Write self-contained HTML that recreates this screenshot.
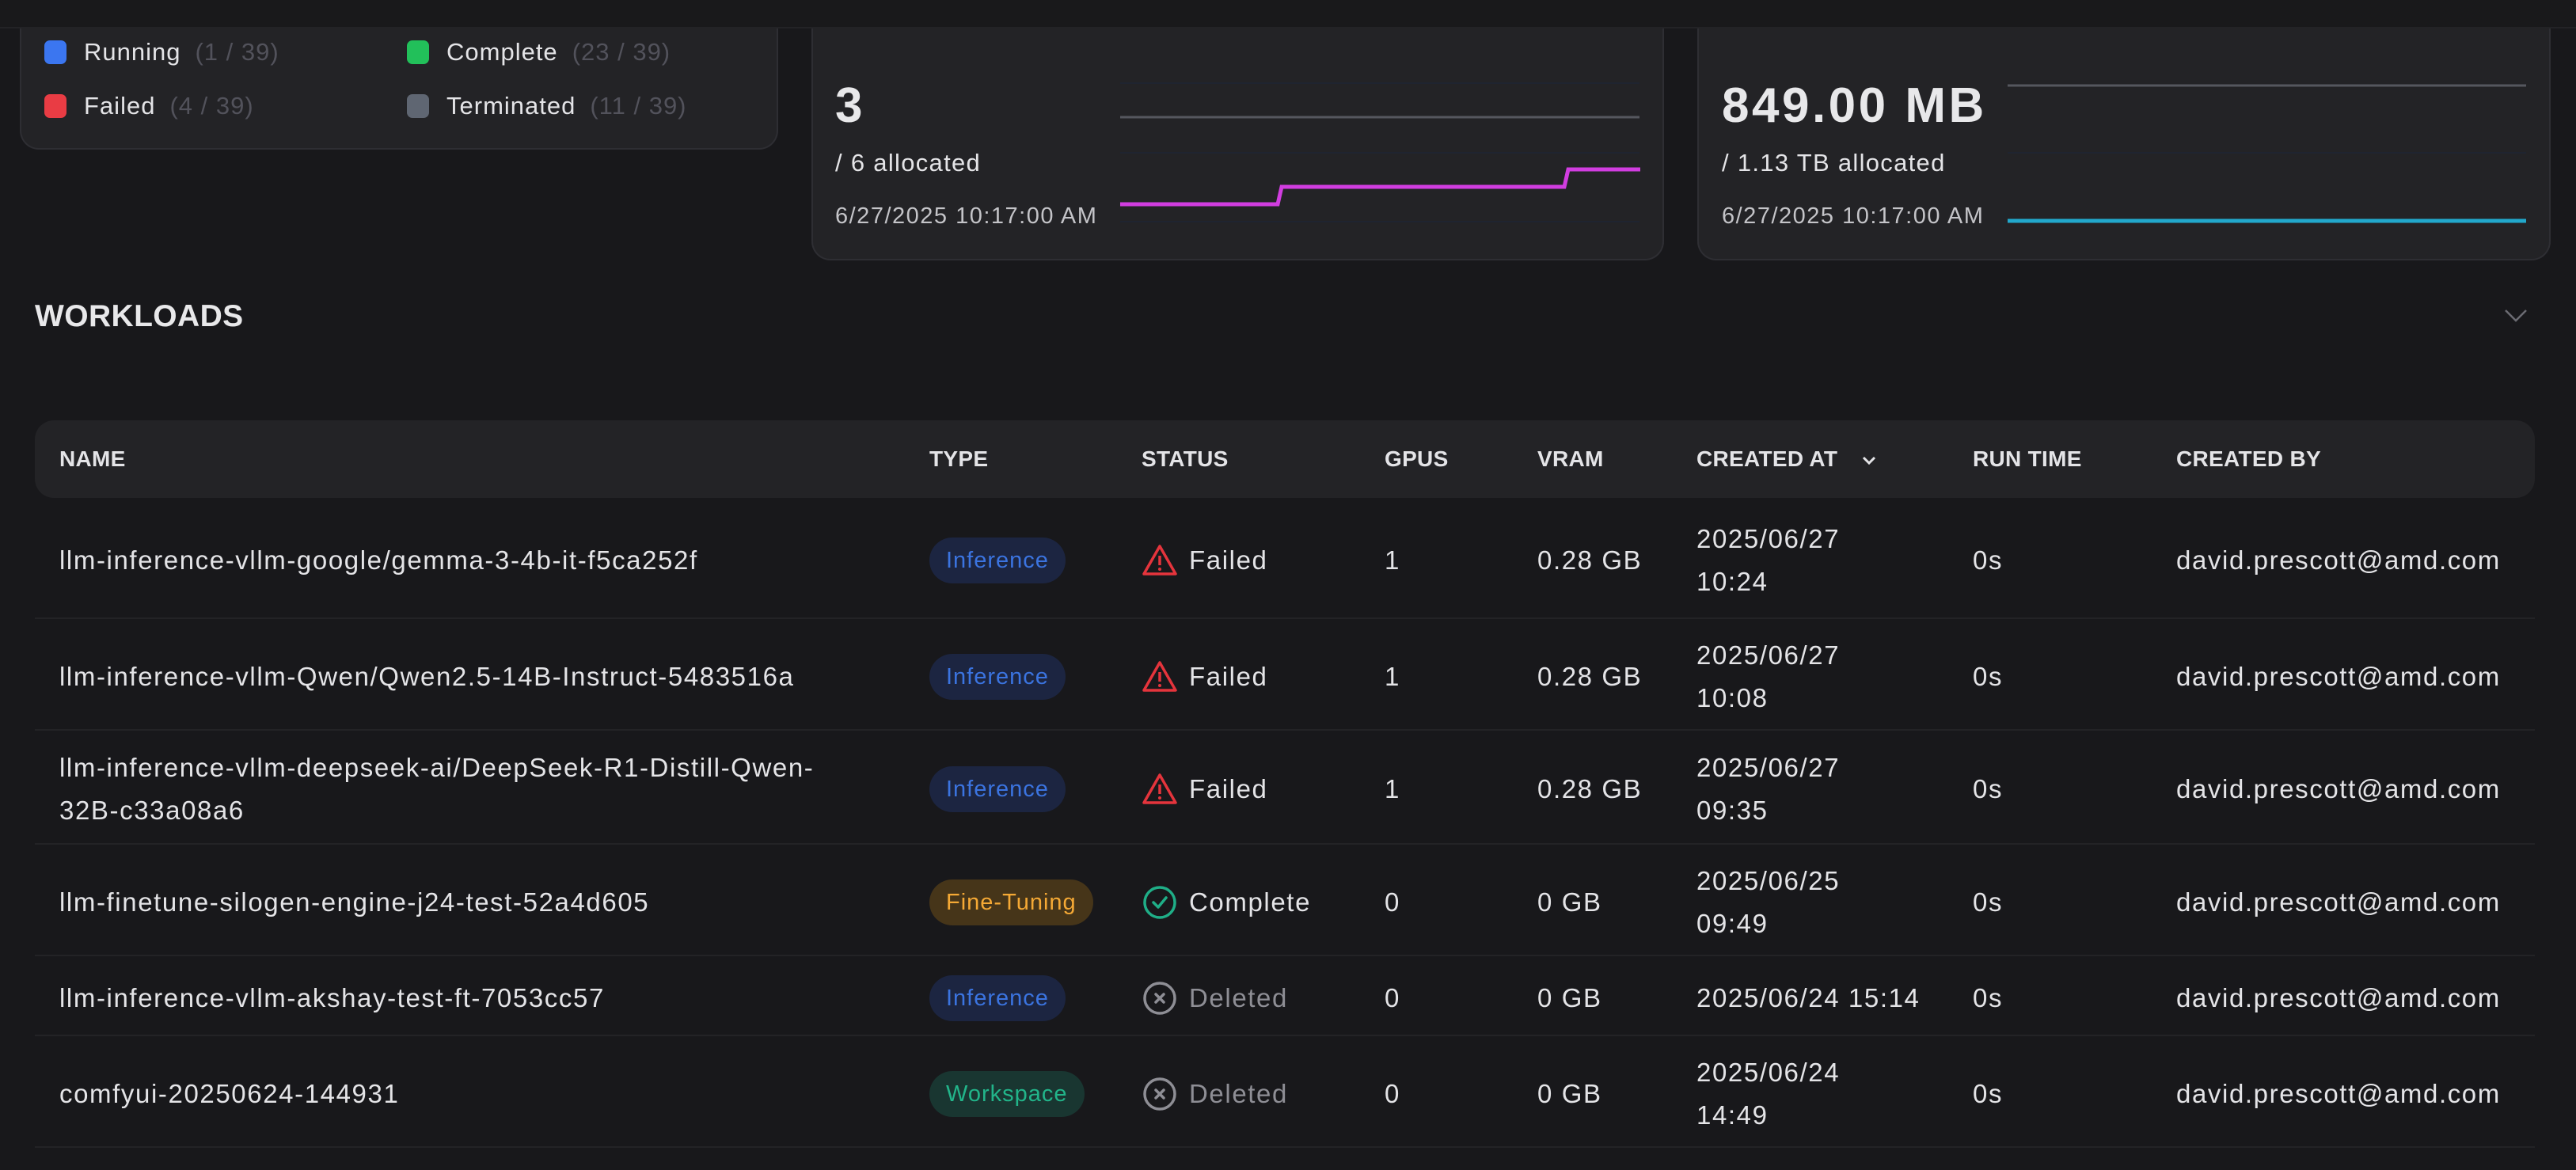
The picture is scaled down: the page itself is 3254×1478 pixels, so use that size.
<!DOCTYPE html>
<html><head><meta charset="utf-8"><style>
*{margin:0;padding:0;box-sizing:border-box}
body{width:3254px;height:1478px;background:#18181b;font-family:"Liberation Sans",sans-serif;color:#e4e4e7;position:relative;overflow:hidden}
.abs{position:absolute}
.top{left:0;top:0;width:3254px;height:36px;background:#19191b;border-bottom:2px solid #232326}
.card{position:absolute;background:#232326;border:2px solid #2e2e33;border-top:none;border-radius:0 0 24px 24px}
.sq{position:absolute;width:28px;height:30px;border-radius:7px}
.lg{position:absolute;font-size:31px;line-height:40px;color:#e4e4e7;letter-spacing:1px}
.lg span{color:#52525b;margin-left:18px}
.big{font-size:62px;font-weight:bold;color:#e8e8ea;letter-spacing:3.5px}
.sub{font-size:31px;color:#e4e4e7;letter-spacing:1.3px}
.dt{font-size:29px;color:#c4c4c8;letter-spacing:1.5px}
.th{position:absolute;top:531px;left:44px;width:3158px;height:98px;background:#232326;border-radius:24px}
.h{position:absolute;top:560px;font-size:28px;font-weight:bold;color:#e4e4e7;line-height:40px;letter-spacing:0.3px}
.row{position:absolute;left:44px;width:3158px;border-bottom:2px solid #232326}
.c{position:absolute;top:0;height:100%;display:flex;align-items:center;font-size:33px;line-height:54px;color:#e4e4e7;letter-spacing:1.6px;padding-top:6px}
.b{display:inline-block;height:58px;line-height:58px;border-radius:29px;padding:0 21px;font-size:29px;letter-spacing:1px}
.inf{background:#1c2541;color:#3b74e0}
.ft{background:#463519;color:#f5a935}
.ws{background:#193631;color:#22b58a}
.st svg{margin-right:14px}
</style></head><body>
<div class="abs top"></div>

<div class="card" style="left:25px;top:36px;width:958px;height:153px"></div>
<div class="sq" style="left:56px;top:51px;background:#3b76f0"></div>
<div class="lg" style="left:106px;top:46px">Running<span>(1 / 39)</span></div>
<div class="sq" style="left:514px;top:51px;background:#22c05a"></div>
<div class="lg" style="left:564px;top:46px">Complete<span>(23 / 39)</span></div>
<div class="sq" style="left:56px;top:119px;background:#e93c44"></div>
<div class="lg" style="left:106px;top:114px">Failed<span>(4 / 39)</span></div>
<div class="sq" style="left:514px;top:119px;background:#5f6672"></div>
<div class="lg" style="left:564px;top:114px">Terminated<span>(11 / 39)</span></div>

<div class="card" style="left:1025px;top:36px;width:1077px;height:293px"></div>
<div class="abs big" style="left:1055px;top:98px">3</div>
<div class="abs sub" style="left:1055px;top:188px">/ 6 allocated</div>
<div class="abs dt" style="left:1055px;top:257px">6/27/2025 10:17:00 AM</div>
<svg class="abs" style="left:1415px;top:100px" width="657" height="200">
<line x1="0" y1="5" x2="656" y2="5" stroke="#1f2430" stroke-width="2"/>
<line x1="0" y1="48" x2="656" y2="48" stroke="#55575e" stroke-width="3"/>
<line x1="0" y1="93" x2="656" y2="93" stroke="#1f2430" stroke-width="2"/>
<line x1="0" y1="180" x2="656" y2="180" stroke="#1f2430" stroke-width="2"/>
<path d="M0 158 H199 L204 136 H561 L566 114 H657" fill="none" stroke="#d13de0" stroke-width="5"/>
</svg>

<div class="card" style="left:2144px;top:36px;width:1078px;height:293px"></div>
<div class="abs big" style="left:2175px;top:98px">849.00 MB</div>
<div class="abs sub" style="left:2175px;top:188px">/ 1.13 TB allocated</div>
<div class="abs dt" style="left:2175px;top:257px">6/27/2025 10:17:00 AM</div>
<svg class="abs" style="left:2536px;top:100px" width="656" height="200">
<line x1="0" y1="8" x2="655" y2="8" stroke="#55575e" stroke-width="3"/>
<line x1="0" y1="93" x2="655" y2="93" stroke="#1f2430" stroke-width="2"/>
<path d="M0 179 H655" fill="none" stroke="#22a8cc" stroke-width="5"/>
</svg>

<div class="abs" style="left:44px;top:378px;font-size:39px;font-weight:bold;color:#e8e8ea;letter-spacing:0.4px">WORKLOADS</div>
<svg class="abs" style="left:3163px;top:390px" width="30" height="18"><path d="M2 2 L15 15 L28 2" fill="none" stroke="#6b6b72" stroke-width="2.5"/></svg>

<div class="th"></div>
<div class="h" style="left:75px">NAME</div>
<div class="h" style="left:1174px">TYPE</div>
<div class="h" style="left:1442px">STATUS</div>
<div class="h" style="left:1749px">GPUS</div>
<div class="h" style="left:1942px">VRAM</div>
<div class="h" style="left:2143px">CREATED AT <svg width="20" height="14" style="margin-left:22px;vertical-align:middle"><path d="M3 3 L10 10 L17 3" fill="none" stroke="#e4e4e7" stroke-width="3"/></svg></div>
<div class="h" style="left:2492px">RUN TIME</div>
<div class="h" style="left:2749px">CREATED BY</div>

<div class="row" style="top:629px;height:153px">
<div class="c" style="left:31px">llm-inference-vllm-google/gemma-3-4b-it-f5ca252f</div>
<div class="c" style="left:1130px"><span class="b inf">Inference</span></div>
<div class="c st" style="left:1398px"><svg width="46" height="42" viewBox="0 0 46 42"><path d="M23 3 L43 38 H3 Z" fill="none" stroke="#e5343c" stroke-width="3.5" stroke-linejoin="round"/><line x1="23" y1="15" x2="23" y2="27" stroke="#e5343c" stroke-width="3.5"/><circle cx="23" cy="32" r="2" fill="#e5343c"/></svg>Failed</div>
<div class="c" style="left:1705px">1</div>
<div class="c" style="left:1898px">0.28 GB</div>
<div class="c" style="left:2099px">2025/06/27<br>10:24</div>
<div class="c" style="left:2448px">0s</div>
<div class="c" style="left:2705px">david.prescott@amd.com</div>
</div>
<div class="row" style="top:782px;height:141px">
<div class="c" style="left:31px">llm-inference-vllm-Qwen/Qwen2.5-14B-Instruct-5483516a</div>
<div class="c" style="left:1130px"><span class="b inf">Inference</span></div>
<div class="c st" style="left:1398px"><svg width="46" height="42" viewBox="0 0 46 42"><path d="M23 3 L43 38 H3 Z" fill="none" stroke="#e5343c" stroke-width="3.5" stroke-linejoin="round"/><line x1="23" y1="15" x2="23" y2="27" stroke="#e5343c" stroke-width="3.5"/><circle cx="23" cy="32" r="2" fill="#e5343c"/></svg>Failed</div>
<div class="c" style="left:1705px">1</div>
<div class="c" style="left:1898px">0.28 GB</div>
<div class="c" style="left:2099px">2025/06/27<br>10:08</div>
<div class="c" style="left:2448px">0s</div>
<div class="c" style="left:2705px">david.prescott@amd.com</div>
</div>
<div class="row" style="top:923px;height:144px">
<div class="c" style="left:31px">llm-inference-vllm-deepseek-ai/DeepSeek-R1-Distill-Qwen-<br>32B-c33a08a6</div>
<div class="c" style="left:1130px"><span class="b inf">Inference</span></div>
<div class="c st" style="left:1398px"><svg width="46" height="42" viewBox="0 0 46 42"><path d="M23 3 L43 38 H3 Z" fill="none" stroke="#e5343c" stroke-width="3.5" stroke-linejoin="round"/><line x1="23" y1="15" x2="23" y2="27" stroke="#e5343c" stroke-width="3.5"/><circle cx="23" cy="32" r="2" fill="#e5343c"/></svg>Failed</div>
<div class="c" style="left:1705px">1</div>
<div class="c" style="left:1898px">0.28 GB</div>
<div class="c" style="left:2099px">2025/06/27<br>09:35</div>
<div class="c" style="left:2448px">0s</div>
<div class="c" style="left:2705px">david.prescott@amd.com</div>
</div>
<div class="row" style="top:1067px;height:141px">
<div class="c" style="left:31px">llm-finetune-silogen-engine-j24-test-52a4d605</div>
<div class="c" style="left:1130px"><span class="b ft">Fine-Tuning</span></div>
<div class="c st" style="left:1398px"><svg width="46" height="46" viewBox="0 0 46 46"><circle cx="23" cy="23" r="19" fill="none" stroke="#1fae87" stroke-width="3.5"/><path d="M15 23 L21 29 L31 17" fill="none" stroke="#1fae87" stroke-width="3.5" stroke-linecap="round" stroke-linejoin="round"/></svg>Complete</div>
<div class="c" style="left:1705px">0</div>
<div class="c" style="left:1898px">0 GB</div>
<div class="c" style="left:2099px">2025/06/25<br>09:49</div>
<div class="c" style="left:2448px">0s</div>
<div class="c" style="left:2705px">david.prescott@amd.com</div>
</div>
<div class="row" style="top:1208px;height:101px">
<div class="c" style="left:31px">llm-inference-vllm-akshay-test-ft-7053cc57</div>
<div class="c" style="left:1130px"><span class="b inf">Inference</span></div>
<div class="c st" style="left:1398px;color:#8e8e95"><svg width="46" height="46" viewBox="0 0 46 46"><circle cx="23" cy="23" r="19" fill="none" stroke="#8e8e95" stroke-width="3.5"/><path d="M18 18 L28 28 M28 18 L18 28" stroke="#8e8e95" stroke-width="3.5" stroke-linecap="round"/></svg>Deleted</div>
<div class="c" style="left:1705px">0</div>
<div class="c" style="left:1898px">0 GB</div>
<div class="c" style="left:2099px">2025/06/24 15:14</div>
<div class="c" style="left:2448px">0s</div>
<div class="c" style="left:2705px">david.prescott@amd.com</div>
</div>
<div class="row" style="top:1309px;height:141px">
<div class="c" style="left:31px">comfyui-20250624-144931</div>
<div class="c" style="left:1130px"><span class="b ws">Workspace</span></div>
<div class="c st" style="left:1398px;color:#8e8e95"><svg width="46" height="46" viewBox="0 0 46 46"><circle cx="23" cy="23" r="19" fill="none" stroke="#8e8e95" stroke-width="3.5"/><path d="M18 18 L28 28 M28 18 L18 28" stroke="#8e8e95" stroke-width="3.5" stroke-linecap="round"/></svg>Deleted</div>
<div class="c" style="left:1705px">0</div>
<div class="c" style="left:1898px">0 GB</div>
<div class="c" style="left:2099px">2025/06/24<br>14:49</div>
<div class="c" style="left:2448px">0s</div>
<div class="c" style="left:2705px">david.prescott@amd.com</div>
</div>
</body></html>
